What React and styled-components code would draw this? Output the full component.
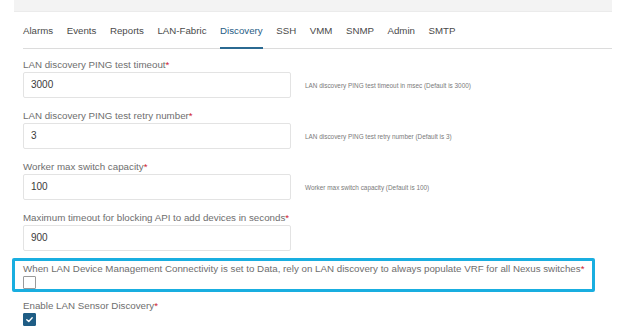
import styled, { createGlobalStyle } from "styled-components";

const GlobalStyle = createGlobalStyle`
  html, body {
    margin: 0;
    padding: 0;
    background: #ffffff;
    font-family: "Liberation Sans", Arial, sans-serif;
  }
`;

const Page = styled.div`
  width: 619px;
  height: 333px;
  overflow: hidden;
  background: #fff;
`;

const TopBar = styled.div`
  margin-left: 14px;
  width: 598px;
  height: 12px;
  background: #f3f3f3;
  border-bottom: 1px solid #ebebeb;
  box-sizing: border-box;
`;

const Content = styled.div`
  padding-left: 23px;
  width: 589px;
`;

const Tabs = styled.nav`
  display: flex;
  gap: 13.6px;
  border-bottom: 1px solid #dcdcdc;
  height: 37px;
  box-sizing: border-box;
`;

const Tab = styled.div`
  font-size: 9.7px;
  line-height: 12px;
  padding-top: 13px;
  color: ${({ active }) => (active ? "#1f5d85" : "#4a4a4a")};
  border-bottom: 2px solid ${({ active }) => (active ? "#2b6a92" : "transparent")};
  margin-bottom: -1px;
  box-sizing: border-box;
  height: 37px;
`;

const Form = styled.div`
  padding-top: 9px;
  display: flex;
  flex-direction: column;
`;

const Field = styled.div`
  margin-bottom: 11px;
`;

const Label = styled.div`
  font-size: 9.75px;
  line-height: 13px;
  color: #6e6e6e;
  margin-bottom: 1px;
  white-space: nowrap;
`;

const Star = styled.span`
  color: #cf2030;
`;

const Row = styled.div`
  display: flex;
  align-items: center;
  gap: 14px;
`;

const Input = styled.div`
  width: 268px;
  height: 26px;
  box-sizing: border-box;
  border: 1px solid #e3e3e3;
  border-radius: 2px;
  padding-left: 7px;
  font-size: 10px;
  line-height: 24px;
  color: #3a3a3a;
`;

const Help = styled.div`
  font-size: 6.4px;
  color: #7a7a7a;
  white-space: nowrap;
`;

const Highlight = styled.div`
  margin-left: -11px;
  margin-top: -4px;
  width: 583px;
  height: 34px;
  box-sizing: border-box;
  border: 3px solid #19aee0;
  border-radius: 2px;
  padding: 1px 8px 0;
`;

const Check = styled.div`
  width: 13px;
  height: 13px;
  box-sizing: border-box;
  border: 1px solid ${({ checked }) => (checked ? "#1f5d85" : "#9a9a9a")};
  background: ${({ checked }) => (checked ? "#1f5d85" : "#fff")};
  border-radius: 1px;
  margin-top: 1px;
  display: flex;
  align-items: center;
  justify-content: center;
`;

const Plain = styled.div`
  margin-top: 7px;
`;

const tabs = ["Alarms", "Events", "Reports", "LAN-Fabric", "Discovery", "SSH", "VMM", "SNMP", "Admin", "SMTP"];

const fields = [
  { label: "LAN discovery PING test timeout", value: "3000", help: "LAN discovery PING test timeout in msec (Default is 3000)" },
  { label: "LAN discovery PING test retry number", value: "3", help: "LAN discovery PING test retry number (Default is 3)" },
  { label: "Worker max switch capacity", value: "100", help: "Worker max switch capacity (Default is 100)" },
  { label: "Maximum timeout for blocking API to add devices in seconds", value: "900", help: "" },
];

const App = () => (
  <Page>
    <GlobalStyle />
    <TopBar />
    <Content>
      <Tabs>
        {tabs.map((t) => (
          <Tab key={t} active={t === "Discovery"}>
            {t}
          </Tab>
        ))}
      </Tabs>
      <Form>
        {fields.map((f) => (
          <Field key={f.label}>
            <Label>
              {f.label}
              <Star>*</Star>
            </Label>
            <Row>
              <Input>{f.value}</Input>
              {f.help && <Help>{f.help}</Help>}
            </Row>
          </Field>
        ))}
        <Highlight>
          <Label>
            When LAN Device Management Connectivity is set to Data, rely on LAN discovery to always populate VRF for all Nexus switches
            <Star>*</Star>
          </Label>
          <Check />
        </Highlight>
        <Plain>
          <Label>
            Enable LAN Sensor Discovery<Star>*</Star>
          </Label>
          <Check checked>
            <svg width="9" height="9" viewBox="0 0 10 10">
              <path d="M2 5.2 L4.2 7.2 L8 3" fill="none" stroke="#fff" strokeWidth="1.5" strokeLinecap="round" strokeLinejoin="round" />
            </svg>
          </Check>
        </Plain>
      </Form>
    </Content>
  </Page>
);

export default App;
